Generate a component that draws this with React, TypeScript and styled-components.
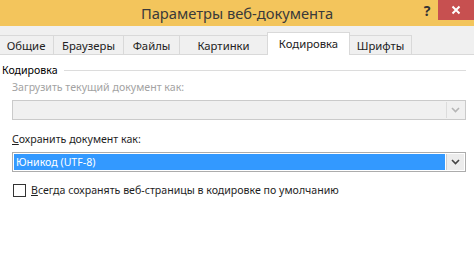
import React from "react";
import styled, { createGlobalStyle } from "styled-components";

const Global = createGlobalStyle`
  html, body {
    margin: 0;
    padding: 0;
    width: 474px;
    height: 266px;
    overflow: hidden;
    background: #ffffff;
    font-family: "Noto Sans", "DejaVu Sans", sans-serif;
  }
`;

const Window = styled.div`
  width: 474px;
  height: 266px;
  display: flex;
  flex-direction: column;
  background: #ffffff;
  color: #000;
  font-size: 10.6px;
`;

const TitleBar = styled.div`
  height: 26px;
  background: #f3c55c;
  display: grid;
  grid-template-columns: 1fr auto 1fr;
  align-items: start;
`;

const Title = styled.div`
  grid-column: 2;
  padding-top: 3px;
  font-size: 14.7px;
  color: #3a3a3a;
`;

const Controls = styled.div`
  grid-column: 3;
  justify-self: end;
  display: flex;
  align-items: start;
`;

const HelpButton = styled.div`
  width: 18px;
  height: 20px;
  font-size: 14px;
  font-weight: 700;
  color: #333;
  display: flex;
  justify-content: center;
  padding-top: 1px;
  margin-right: 2px;
`;

const CloseButton = styled.div`
  width: 36px;
  height: 20px;
  background: #c75050;
  display: flex;
  align-items: center;
  justify-content: center;
`;

const TabStrip = styled.div`
  height: 29px;
  background: #f0f0f0;
  display: flex;
  align-items: flex-end;
  border-bottom: 1px solid #d9d9d9;
  box-sizing: border-box;
  margin-left: -1px;
  font-size: 11.3px;
`;

const Tab = styled.div<{ $w: number; $active?: boolean }>`
  width: ${(p) => p.$w}px;
  height: ${(p) => (p.$active ? 23 : 19)}px;
  box-sizing: border-box;
  border: 1px solid #d9d9d9;
  border-bottom: none;
  margin-left: -1px;
  margin-bottom: ${(p) => (p.$active ? -1 : 0)}px;
  background: ${(p) => (p.$active ? "#ffffff" : "#f0f0f0")};
  display: flex;
  align-items: ${(p) => (p.$active ? "flex-start" : "center")};
  padding-top: ${(p) => (p.$active ? 3 : 0)}px;
  justify-content: center;
  color: #222;
  position: relative;
  z-index: ${(p) => (p.$active ? 1 : 0)};
`;

const Panel = styled.div`
  flex: 1;
  background: #ffffff;
  padding: 7px 8px 0 2px;
`;

const GroupHeader = styled.div`
  display: flex;
  align-items: center;
  gap: 6px;
  height: 16px;
`;

const GroupLine = styled.div`
  flex: 1;
  height: 1px;
  background: #dcdcdc;
`;

const Field = styled.div<{ $top: number }>`
  padding-left: 10px;
  margin-top: ${(p) => p.$top}px;
  display: flex;
  flex-direction: column;
`;

const Label = styled.div<{ $disabled?: boolean }>`
  height: 16px;
  line-height: 16px;
  color: ${(p) => (p.$disabled ? "#a3a3a3" : "#1e1e1e")};
  margin-bottom: 5px;
`;

const Select = styled.div<{ $disabled?: boolean }>`
  height: 20px;
  box-sizing: border-box;
  border: 1px solid ${(p) => (p.$disabled ? "#cacaca" : "#acacac")};
  background: ${(p) => (p.$disabled ? "#f0f0f0" : "#ffffff")};
  display: flex;
  align-items: stretch;
  padding: 1px;
`;

const SelectValue = styled.div`
  flex: 1;
  background: #3399ff;
  color: #ffffff;
  display: flex;
  align-items: center;
  padding-left: 2px;
  margin-right: 1px;
`;

const Spacer = styled.div`
  flex: 1;
`;

const DropButton = styled.div<{ $disabled?: boolean }>`
  width: 17px;
  border-left: 1px solid ${(p) => (p.$disabled ? "#dcdcdc" : "#cfcfcf")};
  background: ${(p) => (p.$disabled ? "#f0f0f0" : "#ececec")};
  display: flex;
  align-items: center;
  justify-content: center;
`;

const CheckRow = styled.label`
  display: flex;
  align-items: center;
  gap: 5px;
  padding-left: 11px;
  margin-top: 11px;
  color: #1e1e1e;
`;

const CheckBox = styled.span`
  width: 13px;
  height: 13px;
  box-sizing: border-box;
  border: 1px solid #333;
  background: #fff;
`;

const Chevron = ({ color }: { color: string }) => (
  <svg width="9" height="6" viewBox="0 0 9 6">
    <path d="M1 1 L4.5 4.5 L8 1" fill="none" stroke={color} strokeWidth="1.6" />
  </svg>
);

const tabs = [
  { name: "Общие", w: 56 },
  { name: "Браузеры", w: 71 },
  { name: "Файлы", w: 57 },
  { name: "Картинки", w: 89 },
  { name: "Кодировка", w: 83, active: true },
  { name: "Шрифты", w: 63 },
];

const App = () => {
  return (
    <Window>
      <Global />
      <TitleBar>
        <Title>Параметры веб-документа</Title>
        <Controls>
          <HelpButton>?</HelpButton>
          <CloseButton>
            <svg width="10" height="10" viewBox="0 0 10 10">
              <path d="M1.5 1.5 L8.5 8.5 M8.5 1.5 L1.5 8.5" stroke="#fff" strokeWidth="2" />
            </svg>
          </CloseButton>
        </Controls>
      </TitleBar>
      <TabStrip>
        {tabs.map((t) => (
          <Tab key={t.name} $w={t.w} $active={t.active}>
            {t.name}
          </Tab>
        ))}
      </TabStrip>
      <Panel>
        <GroupHeader>
          <span>Кодировка</span>
          <GroupLine />
        </GroupHeader>
        <Field $top={1}>
          <Label $disabled>Загрузить текущий документ как:</Label>
          <Select $disabled>
            <Spacer />
            <DropButton $disabled>
              <Chevron color="#b5b5b5" />
            </DropButton>
          </Select>
        </Field>
        <Field $top={11}>
          <Label>
            <u>С</u>охранить документ как:
          </Label>
          <Select>
            <SelectValue>Юникод (UTF-8)</SelectValue>
            <DropButton>
              <Chevron color="#444" />
            </DropButton>
          </Select>
        </Field>
        <CheckRow>
          <CheckBox />
          <span>
            <u>В</u>сегда сохранять веб-страницы в кодировке по умолчанию
          </span>
        </CheckRow>
      </Panel>
    </Window>
  );
};

export default App;
